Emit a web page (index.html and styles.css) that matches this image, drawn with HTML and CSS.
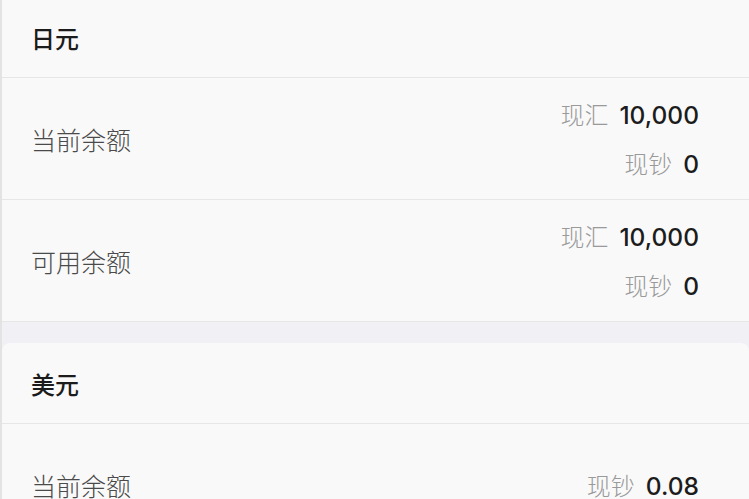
FILE: index.html
```html
<!DOCTYPE html>
<html lang="zh-CN">
<head>
<meta charset="utf-8">
<link rel="stylesheet" href="styles.css">
</head>
<body>
<div class="page">
  <section class="card card-first">
    <div class="card-head">日元</div>
    <div class="row">
      <div class="label">当前余额</div>
      <div class="values">
        <div class="val"><span class="kind">现汇</span><span class="num">10,000</span></div>
        <div class="val"><span class="kind">现钞</span><span class="num">0</span></div>
      </div>
    </div>
    <div class="row">
      <div class="label">可用余额</div>
      <div class="values">
        <div class="val"><span class="kind">现汇</span><span class="num">10,000</span></div>
        <div class="val"><span class="kind">现钞</span><span class="num">0</span></div>
      </div>
    </div>
  </section>
  <section class="card card-second">
    <div class="card-head">美元</div>
    <div class="row">
      <div class="label">当前余额</div>
      <div class="values">
        <div class="val"><span class="kind">现钞</span><span class="num">0.08</span></div>
      </div>
    </div>
  </section>
</div>
</body>
</html>
```

FILE: styles.css
```css
html, body {
  margin: 0;
  padding: 0;
}
body {
  background: #f0f0f5;
  font-family: "Noto Sans CJK SC", "Noto Sans", sans-serif;
  overflow: hidden;
}
.page {
  border-left: 2px solid #e3e3e3;
  min-height: 499px;
  box-sizing: border-box;
}
.card {
  background: #f9f9f9;
}
.card-first {
  margin-top: -3px;
}
.card-second {
  margin-top: 21px;
  border-radius: 8px 8px 0 0;
}
.card-head {
  height: 80px;
  display: flex;
  align-items: center;
  padding-left: 29px;
  font-size: 24px;
  font-weight: 500;
  color: #1c1c1c;
  border-bottom: 1px solid #e6e6e6;
}
.row {
  height: 121px;
  display: flex;
  align-items: center;
  justify-content: space-between;
  padding-left: 29px;
  padding-right: 50px;
  border-bottom: 1px solid #e6e6e6;
}
.label {
  font-size: 25px;
  font-weight: 300;
  color: #4a4a4a;
}
.values {
  display: flex;
  flex-direction: column;
  align-items: flex-end;
  gap: 15px;
}
.val {
  display: flex;
  align-items: baseline;
  gap: 11px;
  height: 34px;
  line-height: 34px;
}
.kind {
  font-size: 24px;
  font-weight: 300;
  color: #9a9a9a;
}
.num {
  font-family: "Inter", "Noto Sans", sans-serif;
  font-size: 24.5px;
  font-weight: 500;
  color: #1c1c1c;
}
```
